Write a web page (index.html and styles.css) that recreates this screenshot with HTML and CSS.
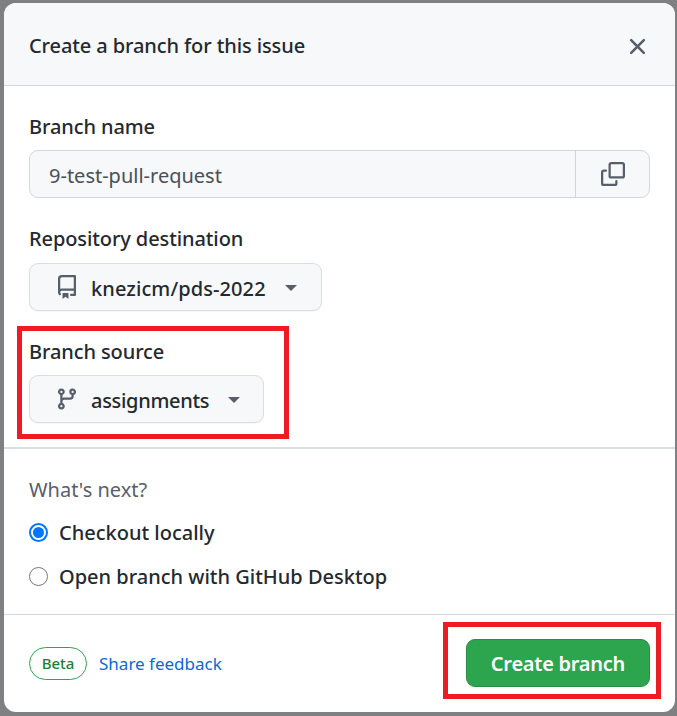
FILE: index.html
```html
<!DOCTYPE html>
<html lang="en">
<head>
<meta charset="utf-8">
<title>Create a branch for this issue</title>
<link rel="stylesheet" href="styles.css">
</head>
<body>
<div class="dialog">
  <header class="dialog-header">
    <h1 class="title">Create a branch for this issue</h1>
    <svg class="close" viewBox="0 0 16 16" width="27" height="27"><path d="M3.72 3.72a.75.75 0 0 1 1.06 0L8 6.94l3.22-3.22a.75.75 0 1 1 1.06 1.06L9.06 8l3.22 3.22a.75.75 0 1 1-1.06 1.06L8 9.06l-3.22 3.22a.75.75 0 0 1-1.06-1.06L6.94 8 3.72 4.78a.75.75 0 0 1 0-1.06Z"/></svg>
  </header>
  <section class="form">
    <div class="field field-name">
      <div class="label">Branch name</div>
      <div class="input-group">
        <div class="input">9-test-pull-request</div>
        <div class="copy">
          <svg viewBox="0 0 16 16" width="24" height="24"><path d="M0 6.75C0 5.784.784 5 1.75 5h1.5a.75.75 0 0 1 0 1.5h-1.5a.25.25 0 0 0-.25.25v7.5c0 .138.112.25.25.25h7.5a.25.25 0 0 0 .25-.25v-1.5a.75.75 0 0 1 1.5 0v1.5A1.75 1.75 0 0 1 9.25 16h-7.5A1.75 1.75 0 0 1 0 14.25Z"/><path d="M5 1.75C5 .784 5.784 0 6.75 0h7.5C15.216 0 16 .784 16 1.75v7.5A1.75 1.75 0 0 1 14.25 11h-7.5A1.75 1.75 0 0 1 5 9.25Zm1.75-.25a.25.25 0 0 0-.25.25v7.5c0 .138.112.25.25.25h7.5a.25.25 0 0 0 .25-.25v-7.5a.25.25 0 0 0-.25-.25Z"/></svg>
        </div>
      </div>
    </div>
    <div class="field field-repo">
      <div class="label">Repository destination</div>
      <div class="select select-repo">
        <svg viewBox="0 0 16 16" width="24" height="24"><path d="M2 2.5A2.5 2.5 0 0 1 4.5 0h8.75a.75.75 0 0 1 .75.75v12.5a.75.75 0 0 1-.75.75h-2.5a.75.75 0 0 1 0-1.5h1.75v-2h-8a1 1 0 0 0-.714 1.7.75.75 0 1 1-1.072 1.05A2.495 2.495 0 0 1 2 11.5Zm10.5-1h-8a1 1 0 0 0-1 1v6.708A2.486 2.486 0 0 1 4.5 9h8ZM5 12.25a.25.25 0 0 1 .25-.25h3.5a.25.25 0 0 1 .25.25v3.25a.25.25 0 0 1-.4.2l-1.45-1.087a.249.249 0 0 0-.3 0L5.4 15.7a.25.25 0 0 1-.4-.2Z"/></svg>
        <span class="select-text">knezicm/pds-2022</span>
        <span class="caret"></span>
      </div>
    </div>
    <div class="field field-source">
      <div class="label">Branch source</div>
      <div class="select select-source">
        <svg viewBox="0 0 16 16" width="24" height="24"><path d="M9.5 3.25a2.25 2.25 0 1 1 3 2.122V6A2.5 2.5 0 0 1 10 8.5H6a1 1 0 0 0-1 1v1.128a2.251 2.251 0 1 1-1.5 0V5.372a2.25 2.25 0 1 1 1.5 0v1.836A2.493 2.493 0 0 1 6 7h4a1 1 0 0 0 1-1v-.628A2.25 2.25 0 0 1 9.5 3.25Zm-6 0a.75.75 0 1 0 1.5 0 .75.75 0 0 0-1.5 0Zm8.25-.75a.75.75 0 1 0 0 1.5.75.75 0 0 0 0-1.5ZM4.25 12a.75.75 0 1 0 0 1.5.75.75 0 0 0 0-1.5Z"/></svg>
        <span class="select-text">assignments</span>
        <span class="caret"></span>
      </div>
    </div>
  </section>
  <section class="next">
    <div class="next-title">What's next?</div>
    <div class="radio-row radio-first"><span class="radio radio-on"></span><span class="radio-label">Checkout locally</span></div>
    <div class="radio-row"><span class="radio"></span><span class="radio-label">Open branch with GitHub Desktop</span></div>
  </section>
  <footer class="footer">
    <div class="footer-left">
      <span class="beta">Beta</span>
      <a class="feedback">Share feedback</a>
    </div>
    <div class="create">Create branch</div>
  </footer>
</div>
<div class="mark mark-source"></div>
<div class="mark mark-create"></div>
</body>
</html>
```

FILE: styles.css
```css
* { box-sizing: border-box; }
html, body { margin: 0; height: 100%; }
body {
  width: 677px;
  height: 716px;
  overflow: hidden;
  position: relative;
  background: #7f8082;
  padding: 3px 2px 4px 4px;
  font-family: "Noto Sans", "Open Sans", sans-serif;
  color: #24292f;
  font-size: 20px;
}
.dialog {
  height: 709px;
  background: #fff;
  border-radius: 12px;
  overflow: hidden;
  display: flex;
  flex-direction: column;
}
.dialog-header {
  height: 83px;
  flex: none;
  background: #f6f8fa;
  border-bottom: 1px solid #d0d7de;
  padding: 4px 24px 0 25px;
  display: flex;
  align-items: center;
  justify-content: space-between;
}
.title { margin: 0; font-size: 20px; font-weight: 500; line-height: 28px; letter-spacing: -0.1px; }
.close { fill: #57606a; }
.form {
  padding: 28px 25px 0;
  height: 363px;
  flex: none;
  border-bottom: 2px solid #d8dee4;
}
.field { display: flex; flex-direction: column; align-items: flex-start; }
.field-repo { margin-top: 28px; }
.field-source { margin-top: 28px; }
.label { font-weight: 500; line-height: 26px; margin-bottom: 10px; letter-spacing: -0.1px; }
.field-repo .label { margin-bottom: 11px; }
.input-group {
  width: 621px;
  height: 48px;
  display: flex;
  border: 1px solid #d0d7de;
  border-radius: 9px;
  background: #f6f8fa;
}
.input {
  flex: 1;
  padding: 2px 0 0 19px;
  line-height: 46px;
  color: #4a5058;
}
.copy {
  width: 74px;
  border-left: 1px solid #d0d7de;
  display: flex;
  align-items: center;
  justify-content: center;
  fill: #57606a;
}
.select {
  height: 48px;
  display: flex;
  align-items: center;
  background: #f6f8fa;
  border: 1px solid #d8dee4;
  border-radius: 9px;
  padding-left: 25px;
  fill: #57606a;
  box-shadow: 0 1px 0 rgba(27, 31, 36, 0.04);
}
.select-repo { width: 293px; }
.select-source { width: 235px; }
.select-text { margin-left: 12px; padding-top: 4px; font-weight: 500; line-height: 28px; }
.select-repo .select-text { letter-spacing: 0.1px; }
.select-source .select-text { letter-spacing: -0.3px; }
.caret {
  margin: 2px 0 0 19px;
  width: 0;
  height: 0;
  border-left: 6px solid transparent;
  border-right: 6px solid transparent;
  border-top: 6px solid #57606a;
}
.next {
  padding: 27px 25px 0;
  height: 166px;
  flex: none;
  border-bottom: 1px solid #d0d7de;
}
.next-title { color: #57606a; line-height: 28px; }
.radio-row { display: flex; align-items: center; height: 28px; margin-top: 16px; }
.radio-first { margin-top: 14px; }
.radio {
  width: 19px;
  height: 19px;
  border-radius: 50%;
  border: 1px solid #767676;
  background: #fff;
  flex: none;
}
.radio-on { border: 2px solid #0075ff; background: #0075ff; background-clip: content-box; padding: 2px; }
.radio-label { margin-left: 11px; font-weight: 500; }
.footer {
  flex: 1;
  display: flex;
  align-items: center;
  justify-content: space-between;
  padding: 0 25px 1px;
}
.footer-left { display: flex; align-items: center; }
.beta {
  width: 58px;
  height: 33px;
  border: 1px solid #2da44e;
  border-radius: 17px;
  color: #1a7f37;
  font-size: 15px;
  font-weight: 500;
  display: flex;
  align-items: center;
  justify-content: center;
}
.feedback { margin-left: 12px; color: #0969da; font-size: 17px; }
.create {
  width: 184px;
  height: 48px;
  padding-top: 1px;
  background: #2da44e;
  border: 1px solid #288f45;
  border-radius: 9px;
  color: #fff;
  font-weight: 600;
  letter-spacing: -0.25px;
  display: flex;
  align-items: center;
  justify-content: center;
}
.mark { position: absolute; border: 5px solid #ed1c24; }
.mark-source { left: 17px; top: 326px; width: 272px; height: 113px; }
.mark-create { left: 443px; top: 622px; width: 218px; height: 77px; }
```
